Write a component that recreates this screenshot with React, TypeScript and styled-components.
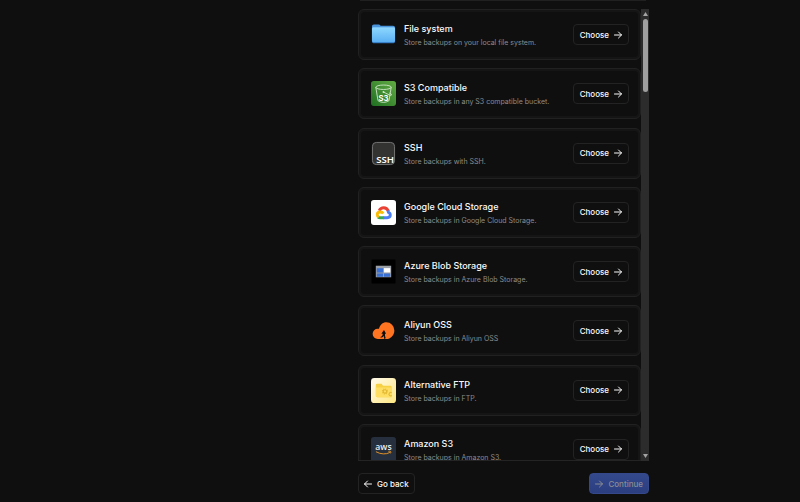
import React from "react";
import styled, { createGlobalStyle } from "styled-components";

const GlobalStyle = createGlobalStyle`
  *, *::before, *::after { box-sizing: border-box; }
  body {
    margin: 0;
    background: #0f0f0f;
    color: #fafafa;
    font-family: Inter, "Liberation Sans", sans-serif;
  }
`;

const Page = styled.div`
  display: flex;
  justify-content: center;
  height: 100vh;
  padding-left: 207px;
  overflow: hidden;
`;

const Wizard = styled.main`
  display: flex;
  flex-direction: column;
  flex: 0 1 291px;
  min-width: 0;
  padding-bottom: 8px;
`;

const SearchEdge = styled.div`
  flex: none;
  height: 1px;
  margin: 0 3px 8px 2px;
  background: #202020;
`;

const Viewport = styled.div`
  display: flex;
  flex: 1;
  min-height: 0;
`;

const ListWindow = styled.div`
  flex: 1;
  min-width: 0;
  overflow: hidden;
  border-bottom: 1px solid #242424;
`;

const List = styled.ul`
  display: flex;
  flex-direction: column;
  justify-content: space-between;
  min-height: 466px;
  margin: 0;
  padding: 0;
  list-style: none;
`;

const Card = styled.li`
  flex: none;
  padding: 2px;
  border: 1px solid #212121;
  border-radius: 6px;
  background: #151515;
`;

const CardBody = styled.div`
  display: flex;
  align-items: center;
  gap: 8px;
  height: 45px;
  padding: 0 9px 0 10px;
  border-radius: 4px;
  background: #0f0f0f;
`;

const Icon = styled.svg`
  flex: none;
  width: 25px;
  height: 25px;
`;

const CardText = styled.div`
  flex: 1;
  min-width: 0;
  padding-top: 2px;
  white-space: nowrap;
`;

const Title = styled.h2`
  margin: 0 0 3px;
  font-size: 9px;
  font-weight: 500;
  line-height: 12px;
`;

const Description = styled.p`
  margin: 0;
  color: #8c8c8c;
  font-size: 7px;
  line-height: 10px;
`;

const Button = styled.button<{ $primary?: boolean }>`
  display: flex;
  flex: none;
  align-items: center;
  gap: 5px;
  height: 21px;
  padding: 0 5px;
  border: 1px solid ${(p) => (p.$primary ? "#34488a" : "#232323")};
  border-radius: 4px;
  background: ${(p) => (p.$primary ? "linear-gradient(#34488c, #2a3e80)" : "#0f0f0f")};
  color: ${(p) => (p.$primary ? "#8b8c93" : "#fafafa")};
  font-family: inherit;
  font-size: 8px;
  font-weight: 500;
  line-height: 12px;
`;

const ChooseButton = styled(Button)`
  padding: 0 6px;
`;

const ArrowSvg = styled.svg`
  width: 8px;
  height: 8px;
  fill: none;
  stroke: currentColor;
  stroke-width: 1;
  stroke-linecap: round;
  stroke-linejoin: round;
`;

const Scrollbar = styled.div`
  display: flex;
  flex: none;
  flex-direction: column;
  align-items: center;
  width: 8px;
  padding: 3px 0;
  background: #2c2c2c;
`;

const Thumb = styled.div`
  width: 5px;
  height: 73px;
  margin: 3px 0 auto;
  border-radius: 3px;
  background: #9f9f9f;
`;

const Caret = styled.svg`
  width: 5px;
  height: 4px;
  fill: #a3a3a3;
`;

const Footer = styled.footer`
  display: flex;
  flex: none;
  justify-content: space-between;
  padding-top: 12px;
`;

const Arrow = ({ left = false }: { left?: boolean }) => (
  <ArrowSvg viewBox="0 0 8 8" aria-hidden="true">
    <path d={left ? "M7.500 4h-7M3.500 1l-3 3 3 3" : "M.5 4h7M4.500 1l3 3-3 3"} />
  </ArrowSvg>
);

const FolderIcon = () => (
  <Icon viewBox="0 0 26 26" aria-hidden="true">
    <defs>
      <linearGradient id="folder" x2="0" y2="1">
        <stop stopColor="#8fd8ff" />
        <stop offset="1" stopColor="#5ab0f3" />
      </linearGradient>
    </defs>
    <path d="M1 4.500q0-2 2-2h5q1 0 2 1.500h13q2 0 2 2V19H1z" fill="#4a94dc" />
    <rect x="1" y="5.500" width="24" height="16.500" rx="1.500" fill="#2f74bd" />
    <rect x="1" y="5.500" width="24" height="15.500" rx="1.500" fill="url(#folder)" />
  </Icon>
);

const BucketIcon = () => (
  <Icon viewBox="0 0 26 26" aria-hidden="true">
    <defs>
      <linearGradient id="bucket" x1="0" y1="1" x2="1" y2="0">
        <stop stopColor="#1f6f22" />
        <stop offset="1" stopColor="#62ab43" />
      </linearGradient>
    </defs>
    <rect width="26" height="26" rx="3" fill="url(#bucket)" />
    <g fill="none" stroke="#d5ead0" strokeWidth=".9">
      <ellipse cx="13" cy="6.500" rx="8" ry="2.300" />
      <path d="m5 6.500 2.300 14q5.700 3.500 11.400 0L21 6.500M13 11.500l7 3.500q2 0 1-1.500l-2-1" />
    </g>
    <circle cx="13" cy="11.500" r="1" fill="#d5ead0" />
    <text x="13" y="20.500" textAnchor="middle" fontFamily="Inter, sans-serif" fontSize="8" fontWeight="700" fill="#fff">S3</text>
  </Icon>
);

const SshIcon = () => (
  <Icon viewBox="0 0 26 26" aria-hidden="true">
    <rect x="1.500" y="1.500" width="23" height="23" rx="4" fill="#333331" stroke="#777" />
    <text x="24" y="23" textAnchor="end" fontFamily="Noto Sans, sans-serif" fontSize="10" fontWeight="600" fill="#fff">SSH</text>
  </Icon>
);

const GoogleCloudIcon = () => (
  <Icon viewBox="0 0 26 26" aria-hidden="true">
    <rect width="26" height="26" rx="3" fill="#fff" />
    <g fill="none" strokeWidth="3">
      <path d="M8.500 11q1.500-3 4.700-3 3.400 0 5 3.700" stroke="#ea4335" />
      <path d="M17.500 11q.5 1 .6 1.800 2 .7 2 2.900 0 2.700-3.300 2.700H13" stroke="#4b7df3" />
      <path d="M13.500 18.400H9.500q-1.300 0-2.200-.7" stroke="#34a853" />
      <path d="M8 18q-1.500-1-1.500-2.800 0-2.700 3.200-2.700 2 0 3 1.500" stroke="#fbbc05" />
    </g>
  </Icon>
);

const AzureIcon = () => (
  <Icon viewBox="0 0 26 26" aria-hidden="true">
    <rect x=".5" y=".5" width="25" height="25" rx="1" fill="#000" />
    <rect x="5" y="7" width="16" height="12" fill="#9a9ea5" />
    <path d="M6 9.500h6.500V14H6zM6 15h6.500v3.500H6zM13.500 15H20v3.500h-6.500z" fill="#3970d4" />
    <path d="M13.500 9.500H20V14h-6.500z" fill="#fff" />
  </Icon>
);

const AliyunIcon = () => (
  <Icon viewBox="0 0 26 26" aria-hidden="true">
    <path d="M7 21.800A5.300 5.300 0 0 1 7 11.200q.8 0 1.300.1C9.500 7 12 4.500 16 4.500a8.300 8.300 0 0 1 8.300 8.400c0 5-3.700 8.900-8.500 8.900z" fill="#ff7421" />
    <path d="M9.500 20q2.600-.5 2.900-3.500h-1.600l2.700-4 2.200 4h-1.200q-.2 3 .8 4.500l-1.700.9v-3.400q-1.500 2.700-4.100 1.500z" fill="#0f0f0f" />
  </Icon>
);

const FtpIcon = () => (
  <Icon viewBox="0 0 26 26" aria-hidden="true">
    <defs>
      <linearGradient id="ftp" x2="1" y2="1">
        <stop stopColor="#fffbed" />
        <stop offset="1" stopColor="#ffe780" />
      </linearGradient>
    </defs>
    <rect width="26" height="26" rx="3.500" fill="url(#ftp)" />
    <path d="M5 7.500q0-1.500 1.500-1.500H11l1.500 2H20q1.500 0 1.500 1.500V20H6.500Q5 20 5 18z" fill="#f6d045" />
    <path d="M5 10h16.500v8.500q0 1.500-1.500 1.500H6.500Q5 20 5 18.500z" fill="#ffdf63" />
    <g fill="none" stroke="#e3b935" strokeWidth="1.200">
      <circle cx="14.500" cy="14" r="1.800" />
      <circle cx="14.500" cy="14" r="2.600" strokeDasharray="1 1.040" />
      <path d="M21.500 15.500a1.700 1.700 0 1 0 0 2.600" />
    </g>
  </Icon>
);

const AwsIcon = () => (
  <Icon viewBox="0 0 26 26" aria-hidden="true">
    <rect width="26" height="26" rx="3" fill="#252f3e" />
    <text x="13" y="13.500" textAnchor="middle" fontFamily="Open Sans, sans-serif" fontSize="9" fontWeight="600" fill="#eee">aws</text>
    <path d="M5.500 15.500q7.500 4 14 .7M18.500 14.800q3-.6 2 1.800" fill="none" stroke="#e99523" strokeWidth="1" strokeLinecap="round" />
  </Icon>
);

const destinations = [
  { title: "File system", description: "Store backups on your local file system.", icon: <FolderIcon /> },
  { title: "S3 Compatible", description: "Store backups in any S3 compatible bucket.", icon: <BucketIcon /> },
  { title: "SSH", description: "Store backups with SSH.", icon: <SshIcon /> },
  { title: "Google Cloud Storage", description: "Store backups in Google Cloud Storage.", icon: <GoogleCloudIcon /> },
  { title: "Azure Blob Storage", description: "Store backups in Azure Blob Storage.", icon: <AzureIcon /> },
  { title: "Aliyun OSS", description: "Store backups in Aliyun OSS", icon: <AliyunIcon /> },
  { title: "Alternative FTP", description: "Store backups in FTP.", icon: <FtpIcon /> },
  { title: "Amazon S3", description: "Store backups in Amazon S3.", icon: <AwsIcon /> },
];

export default function App() {
  return (
    <>
      <GlobalStyle />
      <Page>
        <Wizard>
          <SearchEdge />
          <Viewport>
            <ListWindow>
              <List>
                {destinations.map(({ title, description, icon }) => (
                  <Card key={title}>
                    <CardBody>
                      {icon}
                      <CardText>
                        <Title>{title}</Title>
                        <Description>{description}</Description>
                      </CardText>
                      <ChooseButton type="button" aria-label={`Choose ${title}`}>
                        Choose
                        <Arrow />
                      </ChooseButton>
                    </CardBody>
                  </Card>
                ))}
              </List>
            </ListWindow>
            <Scrollbar aria-hidden="true">
              <Caret viewBox="0 0 5 4"><path d="M2.500 0 5 4H0z" /></Caret>
              <Thumb />
              <Caret viewBox="0 0 5 4"><path d="M2.500 4 5 0H0z" /></Caret>
            </Scrollbar>
          </Viewport>
          <Footer>
            <Button type="button">
              <Arrow left />
              Go back
            </Button>
            <Button type="button" $primary disabled>
              <Arrow />
              Continue
            </Button>
          </Footer>
        </Wizard>
      </Page>
    </>
  );
}
